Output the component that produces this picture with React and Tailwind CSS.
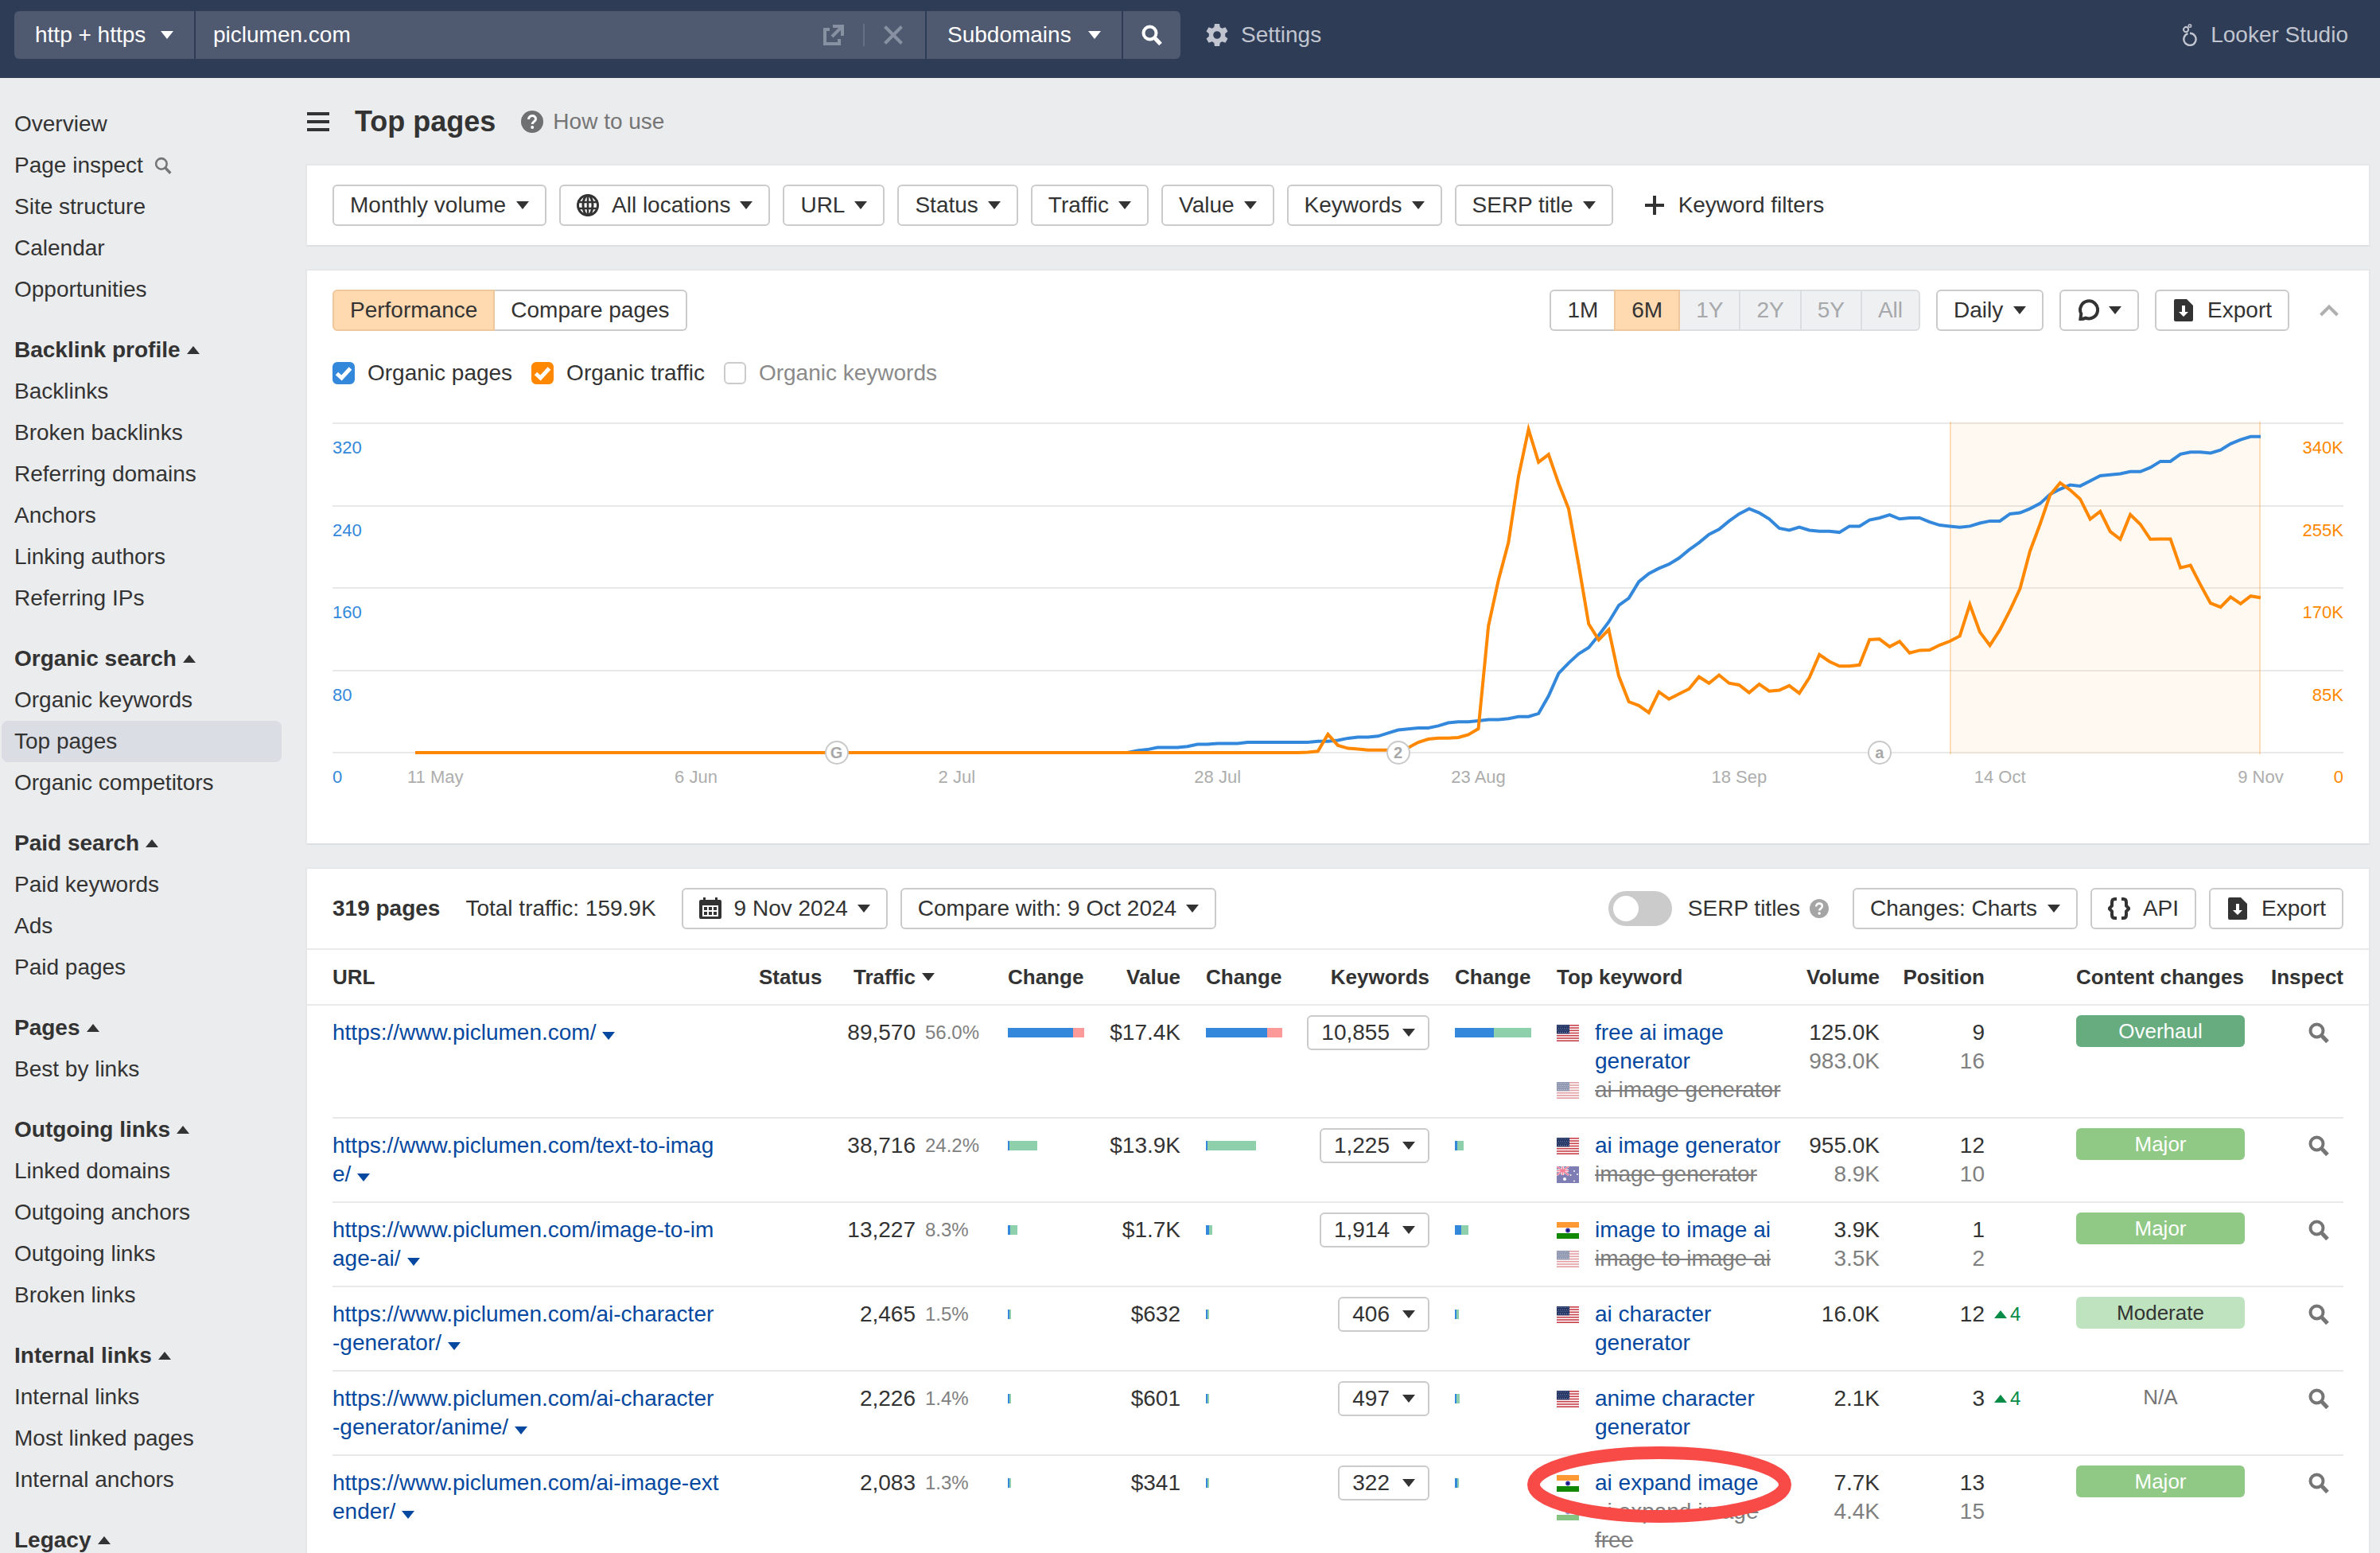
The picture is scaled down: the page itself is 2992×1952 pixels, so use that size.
import React from "react";

/* ---------- data ---------- */

const NAV = [
  { items: ["Overview", "Page inspect", "Site structure", "Calendar", "Opportunities"] },
  {
    title: "Backlink profile",
    items: ["Backlinks", "Broken backlinks", "Referring domains", "Anchors", "Linking authors", "Referring IPs"],
  },
  { title: "Organic search", items: ["Organic keywords", "Top pages", "Organic competitors"] },
  { title: "Paid search", items: ["Paid keywords", "Ads", "Paid pages"] },
  { title: "Pages", items: ["Best by links"] },
  { title: "Outgoing links", items: ["Linked domains", "Outgoing anchors", "Outgoing links", "Broken links"] },
  { title: "Internal links", items: ["Internal links", "Most linked pages", "Internal anchors"] },
  { title: "Legacy", items: [] },
];

// Daily organic pages; the list starts on day 72, everything before is zero.
const PAGES = [
  2, 3, 5, 5, 5, 6, 8, 8, 9, 9, 9, 10, 10, 10, 10, 10, 10, 10, 11, 11, 12, 14, 15, 15, 16, 19, 22, 23, 24, 24, 26, 29,
  30, 30, 31, 32, 32, 33, 35, 35, 38, 55, 77, 87, 96, 102, 114, 127, 143, 150, 166, 174, 179, 183, 189, 197, 204, 212,
  217, 225, 232, 237, 233, 227, 218, 216, 219, 216, 215, 215, 214, 220, 220, 226, 228, 231, 227, 228, 228, 224, 221,
  220, 219, 220, 223, 225, 225, 232, 233, 237, 242, 251, 256, 260, 259, 264, 269, 270, 271, 273, 273, 277, 283, 283,
  290, 292, 292, 291, 294, 300, 304, 307, 307,
];

// Daily organic traffic in thousands, from day 88 on.
const TRAFFIC = [
  0, 0.5, 1.4, 19, 7.5, 4.4, 3.6, 2.7, 2.7, 2.7, 2.7, 5, 10.7, 14, 15, 15, 15.6, 18.6, 24.6, 130.6, 178, 217, 285,
  333.7, 299.8, 307.7, 277.9, 251.6, 194, 132.8, 116.3, 127, 79, 52.6, 48.5, 41.3, 62.7, 55.3, 60.5, 65.7, 78.3, 71.7,
  80.1, 71.7, 69.8, 61.9, 70.7, 63.5, 64.4, 69.1, 61.3, 77.3, 101.2, 94, 89.3, 89.3, 90.5, 116.6, 117.2, 109.4, 114.7,
  102.8, 105.6, 105.9, 111, 115, 120.4, 153, 124.5, 110.6, 126.7, 146.8, 169.1, 208, 235.7, 265.9, 278.5, 271.2, 261.8,
  241, 248.9, 228.2, 220.3, 245.8, 235.7, 220.3, 220.6, 220.6, 190.8, 193.3, 173.2, 154.3, 150.2, 160.6, 153.7, 161.6,
  160,
];

const LAST_DAY = 184;
const PLOT = 414;

const toPoints = (start, values, max) =>
  [[0, 0], [start - 1, 0], ...values.map((v, i) => [start + i, v])]
    .map(([x, v]) => `${x},${(PLOT - (v / max) * PLOT).toFixed(1)}`)
    .join(" ");

const AXIS = [
  ["320", "340K"],
  ["240", "255K"],
  ["160", "170K"],
  ["80", "85K"],
  ["0", "0"],
];
const DATES = ["11 May", "6 Jun", "2 Jul", "28 Jul", "23 Aug", "18 Sep", "14 Oct", "9 Nov"];
const MARKERS = [
  [42, "G"],
  [98, "2"],
  [146, "a"],
];

const ROWS = [
  {
    url: ["https://www.piclumen.com/"],
    traffic: "89,570", pct: "56.0%", c1: [82, 14, "down"],
    value: "$17.4K", c2: [77, 19, "down"],
    keywords: "10,855", c3: [49, 47, "up"],
    kw: [["us", "free ai image generator", false], ["us", "ai image generator", true]],
    volume: ["125.0K", "983.0K"], pos: ["9", "16"], content: "Overhaul",
  },
  {
    url: ["https://www.piclumen.com/text-to-imag", "e/"],
    traffic: "38,716", pct: "24.2%", c1: [2, 35, "up"],
    value: "$13.9K", c2: [2, 61, "up"],
    keywords: "1,225", c3: [3, 8, "up"],
    kw: [["us", "ai image generator", false], ["au", "image generator", true]],
    volume: ["955.0K", "8.9K"], pos: ["12", "10"], content: "Major",
  },
  {
    url: ["https://www.piclumen.com/image-to-im", "age-ai/"],
    traffic: "13,227", pct: "8.3%", c1: [3, 9, "up"],
    value: "$1.7K", c2: [4, 4, "up"],
    keywords: "1,914", c3: [8, 9, "up"],
    kw: [["in", "image to image ai", false], ["us", "image to image ai", true]],
    volume: ["3.9K", "3.5K"], pos: ["1", "2"], content: "Major",
  },
  {
    url: ["https://www.piclumen.com/ai-character", "-generator/"],
    traffic: "2,465", pct: "1.5%", c1: [2, 2, "up"],
    value: "$632", c2: [2, 2, "up"],
    keywords: "406", c3: [2, 3, "up"],
    kw: [["us", "ai character generator", false]],
    volume: ["16.0K"], pos: ["12"], gain: "4", content: "Moderate",
  },
  {
    url: ["https://www.piclumen.com/ai-character", "-generator/anime/"],
    traffic: "2,226", pct: "1.4%", c1: [2, 2, "up"],
    value: "$601", c2: [2, 2, "up"],
    keywords: "497", c3: [2, 4, "up"],
    kw: [["us", "anime character generator", false]],
    volume: ["2.1K"], pos: ["3"], gain: "4", content: "N/A",
  },
  {
    url: ["https://www.piclumen.com/ai-image-ext", "ender/"],
    traffic: "2,083", pct: "1.3%", c1: [2, 2, "up"],
    value: "$341", c2: [2, 2, "up"],
    keywords: "322", c3: [3, 2, "up"],
    kw: [["in", "ai expand image", false], ["in", "ai expand image free", true]],
    volume: ["7.7K", "4.4K"], pos: ["13", "15"], content: "Major", circled: true,
  },
];

/* ---------- icons ---------- */

const Caret = ({ up = false, className = "" }) => (
  <svg viewBox="0 0 16 10" className={`h-[10px] w-4 shrink-0 ${className}`} fill="currentColor" aria-hidden="true">
    <path d={up ? "M8 0l8 10H0z" : "M0 0h16L8 10z"} />
  </svg>
);

const Magnifier = ({ className, thick = 4 }) => (
  <svg viewBox="0 0 26 26" className={className} fill="none" stroke="currentColor" strokeWidth={thick} aria-hidden="true">
    <circle cx="10.5" cy="10.5" r="8" />
    <path d="M16 16l8 8.5" strokeWidth={thick + 1} />
  </svg>
);

const Globe = () => (
  <svg viewBox="0 0 28 28" className="size-7" fill="none" stroke="currentColor" strokeWidth="3" aria-hidden="true">
    <circle cx="14" cy="14" r="12.5" />
    <ellipse cx="14" cy="14" rx="6" ry="12.5" />
    <path d="M2 10h24M2 18h24M14 2v24" strokeWidth="2.6" />
  </svg>
);

const ExportIcon = () => (
  <svg viewBox="0 0 28 28" className="size-7" fill="currentColor" aria-hidden="true">
    <path
      fillRule="evenodd"
      d="M4 0h14l8 8v18a2 2 0 0 1-2 2H4a2 2 0 0 1-2-2V2a2 2 0 0 1 2-2zm8 8v8H8l6 6 6-6h-4V8z"
    />
  </svg>
);

const ChatIcon = () => (
  <svg viewBox="0 0 28 28" className="size-7" fill="none" stroke="currentColor" strokeWidth="4" aria-hidden="true">
    <path d="M4.4 24.9L5.3 18.4A11 11 0 1 1 11 23.6C9 24.6 6.5 25 4.4 24.9z" strokeLinejoin="miter" />
  </svg>
);

const CalendarIcon = () => (
  <svg viewBox="0 0 28 28" className="size-7" fill="currentColor" aria-hidden="true">
    <path
      fillRule="evenodd"
      d="M2 3h3V0h3v3h12V0h3v3h3a2 2 0 0 1 2 2v20a2 2 0 0 1-2 2H2a2 2 0 0 1-2-2V5a2 2 0 0 1 2-2zm2 7v14h20V10z"
    />
    <path d="M6 12h4v4H6zM12 12h4v4h-4zM18 12h4v4h-4zM6 18h4v4H6zM12 18h4v4h-4zM18 18h4v4h-4z" />
  </svg>
);

const BracesIcon = () => (
  <svg viewBox="0 0 28 28" className="size-7" fill="none" stroke="currentColor" strokeWidth="4" aria-hidden="true">
    <path d="M11 2H8.500Q5 2 5 6v4.500L1.500 14 5 17.500V22q0 4 3.500 4H11M17 2h2.500Q23 2 23 6v4.500L26.500 14 23 17.500V22q0 4-3.500 4H17" />
  </svg>
);

const HelpIcon = ({ className }) => (
  <svg viewBox="0 0 28 28" className={className} aria-hidden="true">
    <circle cx="14" cy="14" r="14" fill="currentColor" />
    <path
      d="M9.500 11c0-2.600 1.900-4.400 4.500-4.400s4.500 1.600 4.500 4c0 3.200-4.300 3.300-4.300 6.400"
      fill="none"
      stroke="white"
      strokeWidth="3"
    />
    <circle cx="14.200" cy="21" r="2" fill="white" />
  </svg>
);

const Gear = () => (
  <svg viewBox="0 0 28 28" className="size-7" fill="currentColor" aria-hidden="true">
    <path
      fillRule="evenodd"
      d="M11 0h6l.8 4.300 2.600 1.500 4.100-1.500 3 5.200-3.300 2.800v3.400l3.300 2.800-3 5.200-4.100-1.500-2.600 1.500L17 28h-6l-.8-4.300-2.600-1.500-4.100 1.500-3-5.200 3.300-2.800v-3.400L.5 9.500l3-5.200 4.100 1.500 2.600-1.500zM14 9.200a4.800 4.800 0 1 0 0 9.600 4.800 4.800 0 0 0 0-9.600z"
    />
  </svg>
);

const LookerIcon = () => (
  <svg viewBox="0 0 20 28" className="h-7 w-5" fill="none" stroke="currentColor" aria-hidden="true">
    <path d="M7.500 12.100A7.600 7.600 0 1 0 10 11.700" strokeWidth="2.400" />
    <path d="M7 9.400A3 3 0 1 1 7.200 4.900M7.200 4.900A3 3 0 0 1 7 9.400" strokeWidth="2" />
    <circle cx="9.900" cy="2.500" r="1.700" strokeWidth="1.600" />
  </svg>
);

const ExternalIcon = () => (
  <svg viewBox="0 0 26 26" className="size-[26px]" fill="none" stroke="currentColor" strokeWidth="4" aria-hidden="true">
    <path d="M8 6H2v18h18v-6" />
    <path d="M12 2h12v12M23 3L11 15" />
  </svg>
);

const CloseIcon = () => (
  <svg viewBox="0 0 24 24" className="size-6" fill="none" stroke="currentColor" strokeWidth="4" aria-hidden="true">
    <path d="M1.500 1.500l21 21M22.500 1.500l-21 21" />
  </svg>
);

const Stars = () => {
  const dots = [];
  for (let r = 0; r < 4; r++) for (let c = 0; c < 6; c++) dots.push([1.6 + c * 2.5 + (r % 2) * 0.6, 1.6 + r * 2.6]);
  return dots.map(([x, y]) => <circle key={`${x}-${y}`} cx={x} cy={y} r="0.55" fill="#a9b3cc" />);
};

const Flag = ({ code }) => (
  <svg viewBox="0 0 28 21" className="h-[21px] w-7" role="img" aria-label={code}>
    {code === "us" && (
      <>
        <path d="M0 0h28v21H0z" fill="#fff" />
        {[0, 1, 2, 3, 4, 5, 6].map((i) => (
          <path key={i} d={`M0 ${(i * 3.23).toFixed(2)}h28v1.620H0z`} fill="#c8404a" />
        ))}
        <path d="M0 0h16v11.300H0z" fill="#1f3161" />
        <Stars />
      </>
    )}
    {code === "in" && (
      <>
        <path d="M0 0h28v7H0z" fill="#ff9933" />
        <path d="M0 7h28v7H0z" fill="#fff" />
        <path d="M0 14h28v7H0z" fill="#128807" />
        <circle cx="14" cy="10.500" r="2.900" fill="#3b36a8" />
        <circle cx="14" cy="10.500" r="1.200" fill="#0a0a70" />
      </>
    )}
    {code === "au" && (
      <>
        <path d="M0 0h28v21H0z" fill="#00006b" />
        <path d="M0 0l15 11M15 0L0 11" stroke="#fff" strokeWidth="2.200" />
        <path d="M7.500 0v11M0 5.500h15" stroke="#fff" strokeWidth="3.600" />
        <path d="M7.500 0v11M0 5.500h15M0 0l15 11M15 0L0 11" stroke="#e4002b" strokeWidth="1.600" />
        <circle cx="10" cy="16" r="2" fill="#fff" />
        <circle cx="22" cy="6" r="1" fill="#fff" />
        <circle cx="22" cy="18.500" r="1" fill="#fff" />
        <circle cx="17.500" cy="11" r="1" fill="#fff" />
        <circle cx="26" cy="10" r="1" fill="#fff" />
      </>
    )}
  </svg>
);

/* ---------- controls ---------- */

const BTN =
  "flex h-[52px] shrink-0 items-center whitespace-nowrap rounded-md border-2 border-[#cbcbcb] bg-white px-5 text-[28px] leading-9";

const MenuButton = ({ children, icon }) => (
  <button type="button" aria-haspopup="menu" className={BTN}>
    {icon && <span className="mr-4">{icon}</span>}
    {children}
    <Caret className="ml-3" />
  </button>
);

const Select = ({ label, value, className = "", caretClass = "right-5" }) => (
  <span className="relative flex shrink-0">
    <select aria-label={label} defaultValue={value} className={`appearance-none ${className}`}>
      <option>{value}</option>
    </select>
    <span className={`pointer-events-none absolute inset-y-0 flex items-center ${caretClass}`}>
      <Caret />
    </span>
  </span>
);

const BoxSelect = (props) => (
  <Select
    {...props}
    caretClass="right-[22px]"
    className="h-[52px] rounded-md border-2 border-[#cbcbcb] bg-white pr-12 pl-5 text-[28px] leading-9"
  />
);

const Check = ({ label, checked, box, muted }) => (
  <label className="flex items-center">
    <span className="relative flex">
      <input
        type="checkbox"
        defaultChecked={checked}
        className={`peer size-7 appearance-none rounded-md border-2 border-[#cbcbcb] bg-white ${box}`}
      />
      <svg
        viewBox="0 0 28 28"
        className="pointer-events-none absolute inset-0 hidden size-7 peer-checked:block"
        fill="none"
        stroke="white"
        strokeWidth="5"
        aria-hidden="true"
      >
        <path d="M5.500 14.500l6 5.500L22.500 8" />
      </svg>
    </span>
    <span className={`ml-4 ${muted ? "text-[#8a8a8a]" : ""}`}>{label}</span>
  </label>
);

const PANEL = "bg-white shadow-[0_2px_0_#dddfe1,0_0_0_2px_#e6e7e8]";

/* ---------- sections ---------- */

function Header() {
  return (
    <header className="flex h-[98px] items-start bg-[#2e3c56] pr-10 pl-[18px] text-[28px] leading-9 text-white">
      <form className="mt-[14px] flex h-[60px] w-[1466px] items-stretch gap-[2px]" onSubmit={(e) => e.preventDefault()}>
        <Select
          label="Protocol"
          value="http + https"
          className="h-[60px] w-[226px] rounded-l-md bg-[#4f5970] pl-[26px]"
          caretClass="right-[26px]"
        />
        <div className="flex min-w-0 flex-1 items-center bg-[#4f5970] pr-7 pl-[22px] text-[#8891a2]">
          <input
            type="text"
            aria-label="Domain or URL"
            defaultValue="piclumen.com"
            className="min-w-0 flex-1 bg-transparent text-white outline-none"
          />
          <button type="button" aria-label="Open in new tab">
            <ExternalIcon />
          </button>
          <span className="mx-6 h-7 w-[2px] bg-[#667085]" />
          <button type="button" aria-label="Clear">
            <CloseIcon />
          </button>
        </div>
        <Select
          label="Mode"
          value="Subdomains"
          className="h-[60px] w-[245px] bg-[#4f5970] pl-[26px]"
          caretClass="right-[26px]"
        />
        <button
          type="submit"
          aria-label="Search"
          className="flex w-[72px] items-center justify-center rounded-r-md bg-[#4f5970]"
        >
          <Magnifier className="size-[26px]" />
        </button>
      </form>
      <button type="button" className="mt-[26px] ml-8 flex items-center gap-4 text-[#c0c5cf]">
        <Gear />
        Settings
      </button>
      <a href="#looker" className="mt-[26px] ml-auto flex items-center gap-4 text-[#c0c5cf]">
        <LookerIcon />
        Looker Studio
      </a>
    </header>
  );
}

function Sidebar() {
  return (
    <nav className="flex w-[386px] shrink-0 flex-col gap-6 pt-8 pr-8 pl-[2px]">
      {NAV.map((group, i) => (
        <div key={i} className="flex flex-col">
          {group.title && (
            <button type="button" aria-expanded="true" className="flex h-[52px] items-center gap-2 pl-4 font-bold">
              {group.title}
              <Caret up />
            </button>
          )}
          {group.items.map((item) => (
            <a
              key={item}
              href="#nav"
              aria-current={item === "Top pages" ? "page" : undefined}
              className={`flex h-[52px] items-center gap-[14px] pl-4 ${item === "Top pages" ? "rounded-lg bg-[#dadde3]" : ""}`}
            >
              {item}
              {item === "Page inspect" && <Magnifier className="size-[22px] text-[#757575]" thick={3} />}
            </a>
          ))}
        </div>
      ))}
    </nav>
  );
}

function Filters() {
  return (
    <section className={`flex items-center gap-4 px-8 py-6 ${PANEL}`} aria-label="Filters">
      <BoxSelect label="Volume type" value="Monthly volume" />
      <MenuButton icon={<Globe />}>All locations</MenuButton>
      {["URL", "Status", "Traffic", "Value", "Keywords", "SERP title"].map((f) => (
        <MenuButton key={f}>{f}</MenuButton>
      ))}
      <button type="button" className="ml-6 flex items-center gap-[18px] whitespace-nowrap">
        <svg viewBox="0 0 24 24" className="size-6" stroke="currentColor" strokeWidth="4" aria-hidden="true">
          <path d="M12 0v24M0 12h24" />
        </svg>
        Keyword filters
      </button>
    </section>
  );
}

const RANGES = ["1M", "6M", "1Y", "2Y", "5Y", "All"];

function rangeClass(r) {
  if (r === "1M") return "rounded-l-md border-r-0 border-[#cbcbcb] bg-white";
  if (r === "6M") return "border-[#eec79c] bg-[#ffd9b0]";
  if (r === "All") return "rounded-r-md border-l-0 border-[#dcdee1] bg-[#eff0f2] text-[#a6a8ab]";
  return "border-l-0 border-[#dcdee1] bg-[#eff0f2] text-[#a6a8ab]";
}

function Chart() {
  return (
    <div className="relative mt-11">
      <div className="flex h-[416px] flex-col justify-between">
        {AXIS.map(([l]) => (
          <div key={l} className="h-[2px] bg-[#e9e9e9]" />
        ))}
      </div>

      <div className="absolute inset-x-0 top-4 flex h-[446px] flex-col justify-between text-[22px] leading-8">
        {AXIS.map(([left, right]) => (
          <div key={left} className="flex justify-between">
            <span className="text-[#3388db]">{left}</span>
            <span className="text-[#ff8800]">{right}</span>
          </div>
        ))}
      </div>

      <div className="absolute inset-x-[104px] top-px h-[414px]">
        <div
          className="absolute -inset-y-[2px] right-0 border-x-2 border-[#ff8800]/25 bg-[#ff8800]/5"
          style={{ left: `${(153 / LAST_DAY) * 100}%` }}
        />
        <svg
          viewBox={`0 0 ${LAST_DAY} ${PLOT}`}
          preserveAspectRatio="none"
          className="relative h-full w-full overflow-visible"
          fill="none"
          strokeWidth="4"
          role="img"
          aria-label="Organic pages and organic traffic by day"
        >
          <polyline points={toPoints(72, PAGES, 320)} stroke="#3388db" vectorEffect="non-scaling-stroke" />
          <polyline points={toPoints(88, TRAFFIC, 340)} stroke="#ff8800" vectorEffect="non-scaling-stroke" />
        </svg>
        {MARKERS.map(([day, text]) => (
          <button
            key={text}
            type="button"
            className="absolute -bottom-[15px] flex size-[30px] -translate-x-1/2 items-center justify-center rounded-full border-2 border-[#c9c9c9] bg-white text-[20px] leading-none font-bold text-[#a8a8a8]"
            style={{ left: `${(day / LAST_DAY) * 100}%` }}
          >
            {text}
          </button>
        ))}
        {DATES.map((d, i) => (
          <span
            key={d}
            className="absolute top-[429px] -translate-x-1/2 text-[22px] leading-8 whitespace-nowrap text-[#adadad]"
            style={{ left: `${((2 + i * 26) / LAST_DAY) * 100}%` }}
          >
            {d}
          </span>
        ))}
      </div>
    </div>
  );
}

function Performance() {
  return (
    <section className={`px-8 pt-6 pb-[113px] ${PANEL}`} aria-label="Performance">
      <div className="flex items-center gap-5">
        <div className="flex h-[52px]">
          <button
            type="button"
            aria-pressed="true"
            className="rounded-l-md border-2 border-[#eec79c] bg-[#ffd9b0] px-5"
          >
            Performance
          </button>
          <button type="button" aria-pressed="false" className="rounded-r-md border-2 border-l-0 border-[#cbcbcb] px-5">
            Compare pages
          </button>
        </div>
        <div className="ml-auto flex h-[52px]">
          {RANGES.map((r) => (
            <button
              key={r}
              type="button"
              aria-pressed={r === "6M"}
              disabled={r !== "1M" && r !== "6M"}
              className={`border-2 px-5 ${rangeClass(r)}`}
            >
              {r}
            </button>
          ))}
        </div>
        <BoxSelect label="Granularity" value="Daily" />
        <button type="button" aria-haspopup="menu" aria-label="Annotations" className={BTN}>
          <ChatIcon />
          <Caret className="ml-3" />
        </button>
        <button type="button" className={`gap-4 ${BTN}`}>
          <ExportIcon />
          Export
        </button>
        <button type="button" aria-label="Collapse chart" className="ml-3 flex w-9 justify-center text-[#b0b0b0]">
          <svg viewBox="0 0 24 16" className="h-4 w-6" fill="none" stroke="currentColor" strokeWidth="4" aria-hidden="true">
            <path d="M1.500 14L12 3.500 22.500 14" />
          </svg>
        </button>
      </div>
      <div className="mt-[35px] flex items-center gap-6">
        <Check label="Organic pages" checked box="checked:border-[#3388db] checked:bg-[#3388db]" />
        <Check label="Organic traffic" checked box="checked:border-[#ff8800] checked:bg-[#ff8800]" />
        <Check label="Organic keywords" muted box="checked:border-[#757575] checked:bg-[#757575]" />
      </div>
      <Chart />
    </section>
  );
}

const Bars = ({ data: [base, diff, dir] }) => (
  <div className="mt-3 flex h-3">
    <span className="bg-[#3388db]" style={{ width: base }} />
    <span className={dir === "up" ? "bg-[#8dd0ab]" : "bg-[#fb9a99]"} style={{ width: diff }} />
  </div>
);

const BADGE = {
  Overhaul: "bg-[#66ac7e] text-white",
  Major: "bg-[#90c985] text-white",
  Moderate: "bg-[#bfe3bf] text-[#333]",
  "N/A": "text-[#757575]",
};

const LINE = "border-b-2 border-[#e9e9e9]";

function Row({ row }) {
  return (
    <tr className="align-top">
      <td />
      <td className={`py-4 ${LINE}`}>
        <a href="#url" className="whitespace-nowrap text-[#0548a0]">
          {row.url.map((part, i) => (
            <React.Fragment key={part}>
              {i > 0 && <br />}
              {part}
            </React.Fragment>
          ))}
        </a>
        <button type="button" aria-label="URL actions" className="ml-2 text-[#0548a0]">
          <Caret />
        </button>
      </td>
      <td className={LINE} />
      <td className={`py-4 ${LINE}`}>
        <div className="flex">
          <span className="w-[117px] text-right">{row.traffic}</span>
          <span className="ml-3 text-[24px] text-[#808080]">{row.pct}</span>
        </div>
      </td>
      <td className={`py-4 ${LINE}`}>
        <Bars data={row.c1} />
      </td>
      <td className={`py-4 text-right ${LINE}`}>{row.value}</td>
      <td className={`py-4 pl-8 ${LINE}`}>
        <Bars data={row.c2} />
      </td>
      <td className={`py-3 ${LINE}`}>
        <button
          type="button"
          aria-haspopup="menu"
          className="ml-auto flex h-11 items-center gap-4 rounded-md border-2 border-[#cbcbcb] px-4"
        >
          {row.keywords}
          <Caret />
        </button>
      </td>
      <td className={`py-4 pl-8 ${LINE}`}>
        <Bars data={row.c3} />
      </td>
      <td className={`relative py-4 pl-8 ${LINE}`}>
        {row.kw.map(([flag, text, old], i) => (
          <div key={i} className="flex gap-5">
            <span className={`flex h-9 items-center ${old ? "opacity-50" : ""}`}>
              <Flag code={flag} />
            </span>
            {old ? (
              <s className="text-[#7d7d7d] decoration-2">{text}</s>
            ) : (
              <a href="#keyword" className="text-[#0548a0]">
                {text}
              </a>
            )}
          </div>
        ))}
        {row.circled && (
          <svg
            viewBox="0 0 332 96"
            className="pointer-events-none absolute -top-3 -left-[5px] h-24 w-[332px]"
            fill="none"
            stroke="#f84b47"
            strokeWidth="16"
            aria-hidden="true"
          >
            <ellipse cx="166" cy="48" rx="158" ry="40" />
          </svg>
        )}
      </td>
      <td className={`py-4 text-right ${LINE}`}>
        <div>{row.volume[0]}</div>
        <div className="text-[#808080]">{row.volume[1]}</div>
      </td>
      <td className={`py-4 ${LINE}`}>
        <div className="flex items-center">
          <span className="w-[132px] text-right">{row.pos[0]}</span>
          {row.gain && (
            <span className="ml-3 flex items-center gap-1 text-[24px] text-[#078c47]">
              <Caret up />
              {row.gain}
            </span>
          )}
        </div>
        <div className="w-[132px] text-right text-[#808080]">{row.pos[1]}</div>
      </td>
      <td className={`py-3 ${LINE}`}>
        <div className={`h-10 rounded-md text-center text-[26px] leading-10 ${BADGE[row.content]}`}>{row.content}</div>
      </td>
      <td className={`py-4 ${LINE}`}>
        <button type="button" aria-label="Inspect" className="mr-[18px] ml-auto flex h-9 items-center text-[#757575]">
          <Magnifier className="size-[26px]" />
        </button>
      </td>
      <td />
    </tr>
  );
}

function PagesTable() {
  return (
    <section className={PANEL} aria-label="Pages">
      <div className={`flex items-center px-8 py-6 ${LINE}`}>
        <h2 className="mr-8 font-bold">319 pages</h2>
        <span className="mr-8">Total traffic: 159.9K</span>
        <div className="flex gap-4">
          <MenuButton icon={<CalendarIcon />}>9 Nov 2024</MenuButton>
          <MenuButton>Compare with: 9 Oct 2024</MenuButton>
        </div>
        <div className="ml-auto flex items-center gap-4">
          <label className="flex items-center gap-5">
            <span className="relative flex">
              <input
                type="checkbox"
                role="switch"
                className="peer h-11 w-20 appearance-none rounded-full bg-[#cbcbcb] checked:bg-[#3388db]"
              />
              <span className="pointer-events-none absolute top-[6px] left-[6px] size-8 rounded-full bg-white peer-checked:left-[42px]" />
            </span>
            SERP titles
          </label>
          <HelpIcon className="-ml-1 size-6 text-[#a5a5a5]" />
          <div className="ml-[14px] flex">
            <BoxSelect label="Changes" value="Changes: Charts" />
          </div>
          <button type="button" className={`gap-4 ${BTN}`}>
            <BracesIcon />
            API
          </button>
          <button type="button" className={`gap-4 ${BTN}`}>
            <ExportIcon />
            Export
          </button>
        </div>
      </div>
      <table className="w-full table-fixed border-separate border-spacing-0">
        <colgroup>
          <col className="w-8" />
          <col />
          <col className="w-[80px]" />
          <col className="w-[233px]" />
          <col className="w-[96px]" />
          <col className="w-[121px]" />
          <col className="w-[128px]" />
          <col className="w-[185px]" />
          <col className="w-[128px]" />
          <col className="w-[323px]" />
          <col className="w-[115px]" />
          <col className="w-[247px]" />
          <col className="w-[212px]" />
          <col className="w-[124px]" />
          <col className="w-8" />
        </colgroup>
        <thead className="text-left text-[26px] whitespace-nowrap">
          <tr className="h-[70px]">
            <td className={LINE} />
            <th className={LINE}>URL</th>
            <th className={LINE}>Status</th>
            <th className={LINE}>
              <button type="button" className="flex items-center gap-2">
                <span className="w-[117px] text-right">Traffic</span>
                <Caret />
              </button>
            </th>
            <th className={LINE}>Change</th>
            <th className={`text-right ${LINE}`}>Value</th>
            <th className={`pl-8 ${LINE}`}>Change</th>
            <th className={`text-right ${LINE}`}>Keywords</th>
            <th className={`pl-8 ${LINE}`}>Change</th>
            <th className={`pl-8 ${LINE}`}>Top keyword</th>
            <th className={`text-right ${LINE}`}>Volume</th>
            <th className={LINE}>
              <div className="w-[132px] text-right">Position</div>
            </th>
            <th className={LINE}>Content changes</th>
            <th className={`text-right ${LINE}`}>Inspect</th>
            <td className={LINE} />
          </tr>
        </thead>
        <tbody>
          {ROWS.map((row) => (
            <Row key={row.traffic} row={row} />
          ))}
        </tbody>
      </table>
    </section>
  );
}

export default function App() {
  return (
    <div className="h-screen overflow-hidden bg-[#ebecee] font-['Liberation_Sans',Arial,sans-serif] text-[28px] leading-9 text-[#333]">
      <Header />
      <div className="flex">
        <Sidebar />
        <main className="flex min-w-0 flex-1 flex-col gap-8 pr-[14px]">
          <div className="-mb-8 flex h-[110px] items-center">
            <button type="button" aria-label="Toggle sidebar" className="mr-8">
              <svg viewBox="0 0 28 24" className="h-6 w-7" fill="currentColor" aria-hidden="true">
                <path d="M0 0h28v4H0zM0 10h28v4H0zM0 20h28v4H0z" />
              </svg>
            </button>
            <h1 className="text-[36px] font-bold">Top pages</h1>
            <a href="#help" className="ml-8 flex items-center gap-3 text-[#757575]">
              <HelpIcon className="size-7 text-[#6f7072]" />
              How to use
            </a>
          </div>
          <Filters />
          <Performance />
          <PagesTable />
        </main>
      </div>
    </div>
  );
}
